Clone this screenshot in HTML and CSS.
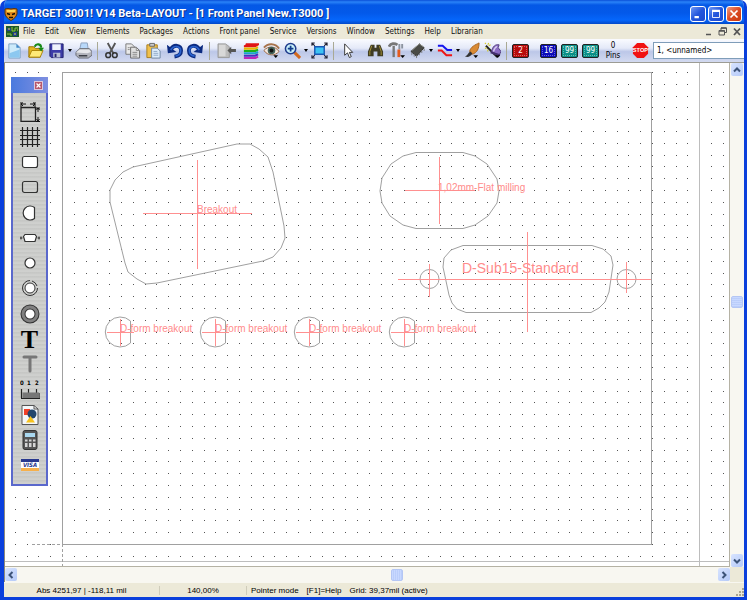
FILE: index.html
```
<!DOCTYPE html>
<html lang="en">
<head>
<meta charset="UTF-8" />
<meta name="viewport" content="width=device-width, initial-scale=1.0"/>
<title>TARGET 3001! V14 Beta-LAYOUT - [1 Front Panel New.T3000 ]</title>
<link rel="stylesheet" href="styles.css">
</head>
<body>

<div class="window">
  <header class="titlebar">
    <svg class="app-icon" viewBox="0 0 14 14"><path d="M1 2L4 1.500 7 2 10 1.500 13 2 13 7C12 10 10 12 7 13.500 4 12 2 10 1 7Z" fill="#e08a1c" stroke="#5b3208"/><path d="M2.500 3H11.500L11 5H3Z" fill="#ffd34d"/><path d="M3 6.500L6 7.500M11 6.500L8 7.500M5 10.500H9" stroke="#1d1200" stroke-width="1.500"/></svg>
    <h1>TARGET 3001! V14 Beta-LAYOUT - [1 Front Panel New.T3000 ]</h1>
    <div class="caption-buttons">
      <button aria-label="Minimize"><svg viewBox="0 0 16 16"><path d="M4 11.500H9" stroke="#fff" stroke-width="2.500"/></svg></button>
      <button aria-label="Maximize"><svg viewBox="0 0 16 16"><path d="M4 4.500H12V12H4Z" fill="none" stroke="#fff"/><path d="M3.500 4.500H12.500" stroke="#fff" stroke-width="2.500"/></svg></button>
      <button class="close" aria-label="Close"><svg viewBox="0 0 16 16"><path d="M4 4L12 12M12 4L4 12" stroke="#fff" stroke-width="2"/></svg></button>
    </div>
  </header>

  <nav class="menubar">
    <svg class="doc-icon" viewBox="0 0 13 11"><path d="M0 0H13V11H0Z" fill="#1c5a2a"/><path d="M1 2H5V5H1ZM7 6H11V10H7Z" fill="#223f8c"/><path d="M6 1V5H9V2H12M1 8H5V10" fill="none" stroke="#8fc63f"/><path d="M2 3H4M8 8H10M11 4H12" stroke="#e6dc4c"/></svg>
    <a href="#">File</a>
    <a href="#">Edit</a>
    <a href="#">View</a>
    <a href="#">Elements</a>
    <a href="#">Packages</a>
    <a href="#">Actions</a>
    <a href="#">Front panel</a>
    <a href="#">Service</a>
    <a href="#">Versions</a>
    <a href="#">Window</a>
    <a href="#">Settings</a>
    <a href="#">Help</a>
    <a href="#">Librarian</a>
    <div class="mdi-buttons">
      <button aria-label="Minimize document"><svg viewBox="0 0 9 9"><path d="M2 7.500H7" stroke="#555" stroke-width="1.500"/></svg></button>
      <button aria-label="Restore document"><svg viewBox="0 0 9 9"><path d="M3 3V1H8.500V5.500H7M1 3.500H6.500V8H1Z" fill="none" stroke="#555"/><path d="M3 1H8.500M1 4H6.500" stroke="#555" stroke-width="1.500"/></svg></button>
      <button aria-label="Close document"><svg viewBox="0 0 9 9"><path d="M2 1.500L8 8M8 1.500L2 8" stroke="#555" stroke-width="1.800"/></svg></button>
    </div>
  </nav>

  <div class="toolbar">
    <button class="tool" aria-label="New"><svg viewBox="0 0 18 18"><path d="M3 2H11L15 6V17H3Z" fill="#cdeafa" stroke="#7da0c4"/><path d="M3.500 12L14.500 8V16.500H3.500Z" fill="#8cc8f0"/><path d="M11 2V6H15Z" fill="#3f87c8"/></svg></button>
    <button class="tool" aria-label="Open"><svg viewBox="0 0 18 18"><path d="M2 5H7L9 7H14V16H2Z" fill="#e4b520" stroke="#9b7300"/><path d="M5 9H17L14 16H2Z" fill="#ffe978" stroke="#a98206"/><path d="M8 5C10 1 15 2 15 6" fill="none" stroke="#188a18" stroke-width="2.200"/><path d="M12 6H18L15 10Z" fill="#188a18"/></svg></button>
    <button class="tool split" aria-label="Save"><svg viewBox="0 0 18 18"><path d="M2 2H16V16.500H3.500L2 15Z" fill="#3b3ba8" stroke="#20206c"/><path d="M4.500 2.500H13.500V8.500H4.500Z" fill="#eef2fc"/><path d="M5.500 11.500H13V16.500H5.500Z" fill="#b9c0d4"/><path d="M7 12.500H9V16H7Z" fill="#26266e"/></svg><i class="caret"></i></button>
    <button class="tool" aria-label="Print"><svg viewBox="0 0 18 18"><path d="M5 8L6.500 1H13L14 8Z" fill="#b8d8fa" stroke="#8b9fbd"/><path d="M1 11L5 7H15L18 10V14L14 17H4L1 14Z" fill="#b2b4bc" stroke="#686b74"/><path d="M1 11L5 8H15L17 10.500 13 12Z" fill="#e6e7ea"/><path d="M4 14.500H13" stroke="#3d4048" stroke-width="1.500"/></svg></button>
    <span class="sep"></span>
    <button class="tool" aria-label="Cut"><svg viewBox="0 0 18 18"><path d="M5 1L11 12M13 1L7 12" stroke="#555" stroke-width="2"/><circle cx="5.500" cy="14" r="2.500" fill="none" stroke="#333" stroke-width="1.600"/><circle cx="12.500" cy="14" r="2.500" fill="none" stroke="#333" stroke-width="1.600"/></svg></button>
    <button class="tool" aria-label="Copy"><svg viewBox="0 0 18 18"><path d="M2 2H8L11 5V13H2Z" fill="#e9e9e9" stroke="#777"/><path d="M7 5.500H13L16.500 9V17H7Z" fill="#e0e0e0" stroke="#666"/><path d="M13 5.500V9H16.500M9 11H14M9 13H14M9 15H14M4 6H6M4 8H6" fill="none" stroke="#888"/></svg></button>
    <button class="tool" aria-label="Paste"><svg viewBox="0 0 18 18"><path d="M2 3H13V16.500H2Z" fill="#f0c04c" stroke="#a87c1e"/><path d="M5 1.500H10V4.500H5Z" fill="#ccc" stroke="#666"/><path d="M7 6.500H13L16 9.500V17H7Z" fill="#dcecfc" stroke="#6e86a4"/><path d="M9 10H13M9 12H14M9 14H14" stroke="#8fa8c6"/></svg></button>
    <button class="tool" aria-label="Undo"><svg viewBox="0 0 18 18"><path d="M5 8C8 2 16 3 16 9C16 13 13 15 9 15.500" fill="none" stroke="#0b2a80" stroke-width="4"/><path d="M1 3L2 12 11 10.500Z" fill="#0b2a80"/><path d="M5 8.500C8 3 15.500 4 15.500 9C15.500 12.500 13 14.500 10 15" fill="none" stroke="#2a62cc" stroke-width="1.800"/></svg></button>
    <button class="tool" aria-label="Redo"><svg viewBox="0 0 18 18"><path d="M13 8C10 2 2 3 2 9C2 13 5 15 9 15.500" fill="none" stroke="#0b2a80" stroke-width="4"/><path d="M17 3L16 12 7 10.500Z" fill="#0b2a80"/><path d="M13 8.500C10 3 2.500 4 2.500 9C2.500 12.500 5 14.500 8 15" fill="none" stroke="#2a62cc" stroke-width="1.800"/></svg></button>
    <span class="sep"></span>
    <button class="tool wide" aria-label="Import"><svg viewBox="0 0 22 18"><path d="M2 2H10L14 5V16.500H2Z" fill="#bcbcbc" stroke="#999"/><path d="M3 3H10V15H3Z" fill="#d8d8d8"/><path d="M12 9L16 5V7.500H21V10.500H16V13Z" fill="#555"/></svg></button>
    <button class="tool" aria-label="Layers"><svg viewBox="0 0 18 18"><g stroke-width="2.200"><path d="M4 2.500H17L14 4.500H2" stroke="#e01515" fill="#e01515"/><path d="M2 7H14L17 5.500" stroke="#e8b800" fill="none"/><path d="M2 9.500H14L17 8" stroke="#19b219" fill="none"/><path d="M2 12H14L17 10.500" stroke="#18a5c8" fill="none"/><path d="M2 14.500H14L17 13" stroke="#4630c0" fill="none"/><path d="M2 17H14L17 15.500" stroke="#c026b8" fill="none"/></g></svg></button>
    <button class="tool" aria-label="Visibility"><svg viewBox="0 0 18 18"><path d="M1 6C5 1 13 1 17 7" fill="none" stroke="#a8744c" stroke-width="2"/><path d="M1 9C5 4 13 4 17 10C13 15 5 15 1 9Z" fill="#f4e9e0" stroke="#96613c"/><circle cx="9" cy="9" r="4" fill="#426058"/><circle cx="9" cy="9" r="2" fill="#111"/><path d="M11 14H16L13.500 17Z" fill="#000"/></svg></button>
    <button class="tool split" aria-label="Zoom"><svg viewBox="0 0 18 18"><path d="M11 11L17 17" stroke="#d2691e" stroke-width="3.200"/><circle cx="7" cy="7" r="5.500" fill="#c9f0fa" stroke="#1f3b8c" stroke-width="1.600"/><path d="M4 7H10M7 4V10" stroke="#113c8c" stroke-width="1.800"/></svg><i class="caret"></i></button>
    <button class="tool" aria-label="Fit"><svg viewBox="0 0 18 18"><path d="M4 5H14V13H4Z" fill="#3cc2f4" stroke="#1756b4" stroke-width="1.500"/><path d="M1 1L4 4M17 1L14 4M1 17L4 14M17 17L14 14M1 4V1H4M14 1H17V4M1 14V17H4M14 17H17V14" fill="none" stroke="#223" stroke-width="1.200"/></svg></button>
    <span class="sep"></span>
    <button class="tool" aria-label="Pointer"><svg viewBox="0 0 18 18"><path d="M6 2V14L9 11.500 11 16.500 13 15.500 11 11H14.500Z" fill="#fff" stroke="#333"/></svg></button>
    <button class="tool spaced" aria-label="Find"><svg viewBox="0 0 18 18"><path d="M4 3H8V6H10V3H14L17 10V15H11V10H7V15H1V10Z" fill="#3f3c24"/><path d="M5 4L3 10V14M13 4L15 10V14" fill="none" stroke="#a79436"/></svg></button>
    <button class="tool" aria-label="Tools"><svg viewBox="0 0 18 18"><path d="M1 5C3 1 7 1 10 3" fill="none" stroke="#777" stroke-width="3"/><path d="M6 4V16" stroke="#777" stroke-width="2.500"/><path d="M12 2V8M15 2V7" stroke="#8b939f" stroke-width="2"/><path d="M11.500 8V16" stroke="#e45a1d" stroke-width="3"/><path d="M13 14H18L15.500 17Z" fill="#000"/></svg></button>
    <button class="tool split" aria-label="Component"><svg viewBox="0 0 18 18"><path d="M2 10L11 2 16 6 8 15Z" fill="#4a4b46" stroke="#2c2c28"/><path d="M3 9L11 2 15 5" fill="none" stroke="#989a90"/><path d="M3 11V14M5.500 12.500V15.500M8 14V17M11 11.500V14M13.500 9V11.500M16 7V9.500" stroke="#777"/></svg><i class="caret"></i></button>
    <button class="tool split" aria-label="Tracks"><svg viewBox="0 0 18 18"><path d="M2 4H7L12 8.500H17" fill="none" stroke="#1414ee" stroke-width="2"/><path d="M2 9H6L11 14H17" fill="none" stroke="#ee1414" stroke-width="2"/></svg><i class="caret"></i></button>
    <button class="tool" aria-label="Brush"><svg viewBox="0 0 18 18"><path d="M7 10C8 5 13 3 17 1C17 7 15 11 10 13Z" fill="#d98a34" stroke="#a8641f"/><path d="M2 15C5 15 5 11 8 10L10 12.500C8 15 5 17 2 15Z" fill="#333"/><path d="M11 14H16L13.500 17Z" fill="#000"/></svg></button>
    <button class="tool" aria-label="Wizard"><svg viewBox="0 0 18 18"><path d="M2 4L14 16" stroke="#222" stroke-width="2"/><path d="M1 1L2 2M5 1L4 3M1 7L3 6M7 3L5 4M4 8V10" stroke="#d2c92b" stroke-width="1.200"/><path d="M8 10C9 5 12 2 16 3L15 6 18 10 16 14Z" fill="#8a6cc4" stroke="#54407e"/><path d="M10 10C11 7 12 5 14 5" fill="none" stroke="#d8cdf0" stroke-width="1.500"/><path d="M7 11L17 14" stroke="#44306e" stroke-width="2"/><path d="M12 14H17L14.500 17Z" fill="#000"/></svg></button>
    <span class="sep"></span>
    <button class="tool layer red">2</button>
    <button class="tool layer blue spaced">16</button>
    <button class="tool layer teal">99</button>
    <button class="tool layer teal">99</button>
    <div class="pins">0<br>Pins</div>
    <button class="tool" aria-label="Stop"><svg viewBox="0 0 18 18"><path d="M5.500 1H12.500L17 5.500V12.500L12.500 17H5.500L1 12.500V5.500Z" fill="#f01212"/><text x="9" y="11" class="stop-text">STOP</text></svg></button>
    <input class="signal" type="text" aria-label="Signal" value="1, &lt;unnamed&gt;">
  </div>

  <main class="workspace">
    <div class="sheet" id="sheet">
      <svg class="drawing">
        <g transform="translate(-5 -63)">
          <g id="gridDots" fill="#555"></g>
          <path class="limits" d="M5 561.500H4000M699.500 63V4000"/>
          <path class="origin" d="M32 544.500H62M62.500 544V566"/>
          <rect class="board" x="62.500" y="72.500" width="589" height="472"/>

          <polygon class="outline" points="110,190 110,202 125,263 128,272 137,279 146,284 157,283 263,261 273,257 281,248 285,238 284,226 273,172 268,157 259,149 250,144 237,144 133,167 123,172 115,180"/>
          <path class="cross" d="M143 213.500H252M197.500 160V269"/>
          <text class="label" x="197" y="213">Breakout</text>

          <polygon class="outline" points="416,152.500 463,152.500 475,156 487,164 497,179 499,191 497,203 488,216 475,225 463,228.500 416,228.500 403,225 390,216 382,203 380,191 382,178 391,164 403,156"/>
          <path class="cross" d="M405 190.500H475M439.500 157V224"/>
          <text class="label" x="438" y="191">1,02mm-Flat milling</text>

          <polygon class="outline" points="463,245.500 592,245.500 603,249 611,256 613,265 609,292 605,302 599,308 591,312.500 466,312.500 457,309 452,303 449,295 443,267 444,258 451,250"/>
          <circle class="outline" cx="429.500" cy="279" r="9.500"/>
          <circle class="outline" cx="626.500" cy="279" r="9.500"/>
          <path class="cross" d="M398 279.500H651M527.500 232V332M429.500 264V297M626.500 262V293"/>
          <text class="label large" x="462" y="273">D-Sub15-Standard</text>

          <g transform="translate(120 332)"><path class="outline" d="M10.500 -11A15 15 0 1 0 10.500 11Z"/><path class="cross" d="M-13 .5H14M.5 -13V14"/><text class="label" x="0" y="0">D-form breakout</text></g>
          <g transform="translate(215 332)"><path class="outline" d="M10.500 -11A15 15 0 1 0 10.500 11Z"/><path class="cross" d="M-13 .5H14M.5 -13V14"/><text class="label" x="0" y="0">D-form breakout</text></g>
          <g transform="translate(309 332)"><path class="outline" d="M10.500 -11A15 15 0 1 0 10.500 11Z"/><path class="cross" d="M-13 .5H14M.5 -13V14"/><text class="label" x="0" y="0">D-form breakout</text></g>
          <g transform="translate(404 332)"><path class="outline" d="M10.500 -11A15 15 0 1 0 10.500 11Z"/><path class="cross" d="M-13 .5H14M.5 -13V14"/><text class="label" x="0" y="0">D-form breakout</text></g>
        </g>
      </svg>

      <aside class="palette">
        <div class="palette-title">
          <button aria-label="Close palette"><svg viewBox="0 0 9 9"><path d="M2 2L7 7M7 2L2 7" stroke="#fff" stroke-width="1.600"/></svg></button>
        </div>
        <div class="palette-tools">
          <button aria-label="Board outline"><svg viewBox="0 0 20 20"><path d="M1 5.500H15.500V19.500H1Z" fill="none" stroke="#222" stroke-width="1.300"/><path d="M1 0V5M15 0V5M1 2H6M10 2H15M3 .5L1 2 3 4M13 .5L15 2 13 4M16 6H20M16 19.500H20M18 6V10M18 15V19M16.500 8L18 6 19.500 8M16.500 17L18 19 19.500 17" fill="none" stroke="#111"/></svg></button>
          <button aria-label="Grid"><svg viewBox="0 0 20 20"><path d="M2.500 0V20M7.500 0V20M12.500 0V20M17.500 0V20M0 3.500H20M0 8.500H20M0 12.500H20M0 17.500H20" stroke="#222" stroke-width="1.200"/></svg></button>
          <button aria-label="Filled rectangle"><svg viewBox="0 0 20 20"><rect x="2.500" y="4.500" width="15" height="11" rx="2" fill="#fff" stroke="#333" stroke-width="1.200"/></svg></button>
          <button aria-label="Rectangle"><svg viewBox="0 0 20 20"><rect x="2.500" y="4.500" width="15" height="11" rx="2" fill="none" stroke="#333" stroke-width="1.200"/></svg></button>
          <button aria-label="D-form"><svg viewBox="0 0 20 20"><path d="M14.500 4.500A7 7 0 1 0 14.500 15.500Z" fill="#fff" stroke="#333" stroke-width="1.200"/></svg></button>
          <button aria-label="D-Sub"><svg viewBox="0 0 20 20"><path d="M5 6.500H15L16.500 8.500 15 13.500H5L3.500 8.500Z" fill="#fff" stroke="#333" stroke-width="1.200"/><circle cx="1" cy="10" r="1" stroke="#333" fill="none"/><circle cx="19" cy="10" r="1" stroke="#333" fill="none"/></svg></button>
          <button aria-label="Drill hole"><svg viewBox="0 0 20 20"><circle cx="10" cy="10" r="5" fill="#fff" stroke="#333" stroke-width="1.200"/></svg></button>
          <button aria-label="Threaded hole"><svg viewBox="0 0 20 20"><circle cx="10" cy="10" r="5" fill="#fff" stroke="#333"/><path d="M10 2.500A7.500 7.500 0 1 0 17.500 10M12 3A7.500 7.500 0 0 1 17 8" fill="none" stroke="#333"/></svg></button>
          <button aria-label="Countersunk hole"><svg viewBox="0 0 20 20"><circle cx="10" cy="10" r="7" fill="#fff" stroke="#333" stroke-width="5"/><circle cx="10" cy="10" r="7" fill="none" stroke="#808080" stroke-width="3"/></svg></button>
          <button class="text-tool" aria-label="Text">T</button>
          <button aria-label="Engraved text"><svg viewBox="0 0 20 20"><path d="M4 3H16M10 3V17" stroke="#777" stroke-width="3" stroke-linecap="round" fill="none"/></svg></button>
          <button aria-label="Scale"><svg viewBox="0 0 20 20"><path d="M1 18.500H20M1.500 9V18M4 13V18M6 13V18M8.500 9V18M11 13V18M13 13V18M16.500 9V18M19 13V18" stroke="#222" stroke-width="1.200"/><path d="M2.500 12.500H19V18H2.500Z" fill="#777"/><text class="scale-text" x="0" y="5">0</text><text class="scale-text" x="7" y="5">1</text><text class="scale-text" x="15" y="5">2</text></svg></button>
          <button aria-label="Image"><svg viewBox="0 0 20 20"><path d="M2 .5H14L18 4V19.500H2Z" fill="#f4f7fa" stroke="#555"/><path d="M4 4H10V10H4Z" fill="#f04028"/><circle cx="12" cy="9" r="4.500" fill="#24476d"/><path d="M10.500 11L15 17.500H6Z" fill="#f7c21c"/><path d="M14 .5V4H18" fill="none" stroke="#555"/></svg></button>
          <button aria-label="Calculator"><svg viewBox="0 0 20 20"><rect x="3" y=".5" width="14" height="19" rx="2" fill="#555" stroke="#333"/><path d="M5 3H15V7H5Z" fill="#a9d8f0"/><path d="M5 9.500H7.500V11.500H5ZM9 9.500H11.500V11.500H9ZM13 9.500H15.500V11.500H13ZM5 13H7.500V17H5ZM9 13H11.500V17H9ZM13 13H15.500V17H13Z" fill="#d5d5d5"/></svg></button>
          <button aria-label="Order"><svg viewBox="0 0 20 20"><path d="M1 4H19V16H1Z" fill="#fff"/><path d="M1 4H19V7H1Z" fill="#28388e"/><path d="M1 13H19V16H1Z" fill="#f6b04c"/><text class="visa-text" x="10" y="12">VISA</text></svg></button>
        </div>
      </aside>
    </div>

    <div class="scroll vertical">
      <button aria-label="Scroll up"><svg viewBox="0 0 12 12"><path d="M3 7.500L6 4.500 9 7.500" fill="none" stroke="#3c5378" stroke-width="2"/></svg></button>
      <div class="thumb"></div>
      <button aria-label="Scroll down"><svg viewBox="0 0 12 12"><path d="M3 4.500L6 7.500 9 4.500" fill="none" stroke="#3c5378" stroke-width="2"/></svg></button>
    </div>
    <div class="scroll horizontal">
      <button aria-label="Scroll left"><svg viewBox="0 0 12 12"><path d="M7.500 3L4.500 6 7.500 9" fill="none" stroke="#3c5378" stroke-width="2"/></svg></button>
      <div class="thumb"></div>
      <button aria-label="Scroll right"><svg viewBox="0 0 12 12"><path d="M4.500 3L7.500 6 4.500 9" fill="none" stroke="#3c5378" stroke-width="2"/></svg></button>
    </div>
    <div class="scroll-corner"></div>
  </main>

  <footer class="statusbar">
    <div class="coords">Abs 4251,97 | -118,11 mil</div>
    <div class="zoom">140,00%</div>
    <div class="mode"><span>Pointer mode</span><span>[F1]=Help</span><span>Grid: 39,37mil (active)</span></div>
    <svg class="grip" viewBox="0 0 9 9"><path d="M7 1H9M4 4H6M7 4H9M1 7H3M4 7H6M7 7H9" stroke="#aaa58f" stroke-width="2"/></svg>
  </footer>
</div>

<script src="grid.js"></script>
</body>
</html>
```
FILE: grid.js
```
const sheet = document.getElementById('sheet');
const gridDots = document.getElementById('gridDots');
const pitch = 11.8;
const originX = 62;
const originY = 72;

function drawGrid() {
  gridDots.innerHTML = '';
  const right = sheet.clientWidth + 5;
  const bottom = Math.min(sheet.clientHeight + 63, 560);
  for (let col = -4; originX + col * pitch < right; col++) {
    for (let row = 0; originY + row * pitch < bottom; row++) {
      const dot = document.createElementNS('http://www.w3.org/2000/svg', 'rect');
      dot.setAttribute('x', Math.round(originX + col * pitch));
      dot.setAttribute('y', Math.round(originY + row * pitch));
      dot.setAttribute('width', 1);
      dot.setAttribute('height', 1);
      gridDots.appendChild(dot);
    }
  }
}

drawGrid();
window.addEventListener('resize', drawGrid);
```
FILE: styles.css
```
* {
  box-sizing: border-box;
}
body {
  margin: 0;
  background: #fff;
  font-family: "DejaVu Sans Condensed", "DejaVu Sans", Tahoma, sans-serif;
  font-size: 8px;
  color: #000;
}
button {
  padding: 0;
  border: 0;
  background: none;
  font: inherit;
}
svg {
  display: block;
}
.window {
  display: flex;
  flex-direction: column;
  height: 100vh;
  border: solid #0a3fdc;
  border-width: 0 3px 3px 4px;
  border-radius: 7px 7px 0 0;
  background: #ece9d8;
  overflow: hidden;
}

/* title bar */
.titlebar {
  display: flex;
  align-items: center;
  height: 24px;
  margin: 0 -3px 0 -4px;
  padding: 3px 5px 0 4px;
  background: linear-gradient(#0a4fd8 0, #2a83f8 2px, #0458e6 5px, #0359ea 13px, #0566fb 20px, #0348c8 24px);
}
.app-icon {
  width: 14px;
  height: 14px;
  margin-right: 3px;
}
.titlebar h1 {
  flex: 1;
  margin: 0;
  font-family: Roboto, "Trebuchet MS", sans-serif;
  font-size: 11px;
  font-weight: bold;
  line-height: 16px;
  color: #fff;
  white-space: nowrap;
  text-shadow: 1px 1px #0a2f8c;
}
.caption-buttons {
  display: flex;
  gap: 2px;
}
.caption-buttons button {
  width: 16px;
  height: 16px;
  border: 1px solid #fff;
  border-radius: 3px;
  background: linear-gradient(135deg, #6f98f4, #2456dc 50%, #1b49d0);
}
.caption-buttons .close {
  background: linear-gradient(135deg, #f09a80, #dc4a24 50%, #c8380f);
}

/* menu */
.menubar {
  display: flex;
  align-items: center;
  height: 15px;
  padding-left: 2px;
}
.doc-icon {
  width: 13px;
  height: 11px;
  margin-right: 4px;
}
.menubar a {
  margin-right: 10px;
  color: #111;
  text-decoration: none;
  white-space: nowrap;
}
.mdi-buttons {
  display: flex;
  gap: 5px;
  margin-left: auto;
  padding-right: 3px;
}
.mdi-buttons svg {
  width: 9px;
  height: 9px;
}

/* toolbar */
.toolbar {
  display: flex;
  align-items: center;
  flex: none;
  height: 24px;
  border-bottom: 1px solid #9c9c94;
  background: linear-gradient(#fafbff, #e4e9f8 40%, #bcc7e8 55%, #d3daf0);
  overflow: hidden;
}
.tool {
  display: flex;
  align-items: center;
  justify-content: center;
  flex: none;
  width: 21px;
  height: 20px;
}
.tool svg {
  width: 17px;
  height: 17px;
}
.tool.split {
  width: 27px;
}
.tool.wide {
  width: 27px;
}
.tool.wide svg {
  width: 21px;
}
.tool.spaced {
  margin-left: 7px;
}
.caret {
  margin-left: 3px;
  border: solid transparent;
  border-width: 3px 2px 0;
  border-top-color: #000;
}
.sep {
  flex: none;
  width: 1px;
  height: 18px;
  margin: 0 3px;
  background: #a9a994;
}
.tool.layer {
  width: 17px;
  height: 14px;
  margin-left: 2px;
  margin-right: 2px;
  border: 1px solid #222;
  border-radius: 2px;
  outline: 1px dotted #ffffff60;
  outline-offset: -3px;
  color: #fff;
  line-height: 12px;
}
.tool.layer.spaced {
  margin-left: 9px;
}
.layer.red {
  background: #b80b0b;
}
.layer.blue {
  background: #0a0ab8;
}
.layer.teal {
  background: #0a8f86;
}
.pins {
  flex: none;
  width: 24px;
  margin-right: 5px;
  line-height: 10px;
  text-align: center;
}
.stop-text {
  fill: #fff;
  font-family: "Liberation Sans", Arial, sans-serif;
  font-size: 6px;
  font-weight: bold;
  text-anchor: middle;
}
.signal {
  flex: 1;
  min-width: 0;
  height: 17px;
  margin-left: 2px;
  padding: 0 3px;
  border: 1px solid #7f9db9;
  border-right: 0;
  background: #fff;
  font: inherit;
}

/* workspace */
.workspace {
  display: grid;
  grid-template-columns: 1fr 14px;
  grid-template-rows: 1fr 15px;
  flex: 1;
  min-height: 0;
  border-left: 1px solid #8d8a7c;
}
.sheet {
  position: relative;
  min-width: 0;
  min-height: 0;
  background: #fff;
  border-right: 1px solid #b5b2a4;
  border-bottom: 1px solid #b5b2a4;
  overflow: hidden;
}
.drawing {
  width: 100%;
  height: 100%;
}
.board,
.outline {
  fill: none;
  stroke: #a0a0a0;
}
.limits {
  fill: none;
  stroke: #bdbdbd;
}
.origin {
  fill: none;
  stroke: #a0a0a0;
  stroke-dasharray: 3 2;
}
.cross {
  fill: none;
  stroke: #ff9090;
}
.label {
  fill: #ff8c8c;
  font-family: "Liberation Sans", Arial, sans-serif;
  font-size: 10px;
}
.label.large {
  font-size: 14px;
}

/* floating tool palette */
.palette {
  position: absolute;
  left: 6px;
  top: 14px;
  display: flex;
  flex-direction: column;
  width: 37px;
  height: 409px;
  border: 2px solid #5a68cc;
  border-top: 0;
  background: repeating-linear-gradient(#c9cac8 0, #c9cac8 1px, #d3d4d2 2px, #c2c3c1 4px);
}
.palette-title {
  display: flex;
  align-items: center;
  justify-content: flex-end;
  height: 16px;
  margin: 0 -2px;
  padding-right: 5px;
  background: linear-gradient(90deg, #4a7ade, #7f8fe0);
}
.palette-title button {
  border: 1px solid #dcc8dc;
  background: #b8586c;
}
.palette-title svg {
  width: 7px;
  height: 7px;
}
.palette-tools {
  display: grid;
  grid-auto-rows: 1fr;
  flex: 1;
  padding: 6px 0;
}
.palette-tools button {
  display: flex;
  align-items: center;
  justify-content: center;
}
.palette-tools svg {
  width: 20px;
  height: 20px;
}
.palette-tools .text-tool {
  font-family: "Liberation Serif", "Times New Roman", serif;
  font-size: 26px;
  font-weight: bold;
  line-height: 25px;
}
.scale-text {
  font-size: 6px;
  font-weight: bold;
}
.visa-text {
  fill: #28388e;
  font-size: 6px;
  font-weight: bold;
  font-style: italic;
  text-anchor: middle;
}

/* scroll bars */
.scroll {
  display: flex;
  align-items: center;
  justify-content: space-between;
  background: #f8f7f1;
}
.scroll.vertical {
  flex-direction: column;
}
.scroll button {
  width: 12px;
  height: 13px;
  border-radius: 2px;
  background: linear-gradient(135deg, #d8e4ff, #b4c9f8);
}
.scroll .thumb {
  width: 12px;
  height: 12px;
  border: 1px solid #b4c6f4;
  border-radius: 2px;
  background: repeating-linear-gradient(#c8d8ff 0, #c8d8ff 1px, #adc3f6 2px);
}
.vertical .thumb {
  margin-top: -26px;
}
.horizontal .thumb {
  margin-left: 58px;
  background: repeating-linear-gradient(90deg, #c8d8ff 0, #c8d8ff 1px, #adc3f6 2px);
}
.scroll-corner {
  background: #ece9d8;
}

/* status bar */
.statusbar {
  display: flex;
  align-items: center;
  height: 15px;
  border-top: 1px solid #f8f7f0;
  font-family: "Liberation Sans", Arial, sans-serif;
  white-space: nowrap;
}
.coords {
  width: 156px;
  border-right: 1px solid #cfccba;
  text-align: center;
}
.zoom {
  width: 87px;
  border-right: 1px solid #cfccba;
  text-align: center;
}
.mode {
  display: flex;
  flex: 1;
  gap: 8px;
  padding-left: 4px;
}
.grip {
  align-self: flex-end;
  width: 9px;
  height: 9px;
}
```
